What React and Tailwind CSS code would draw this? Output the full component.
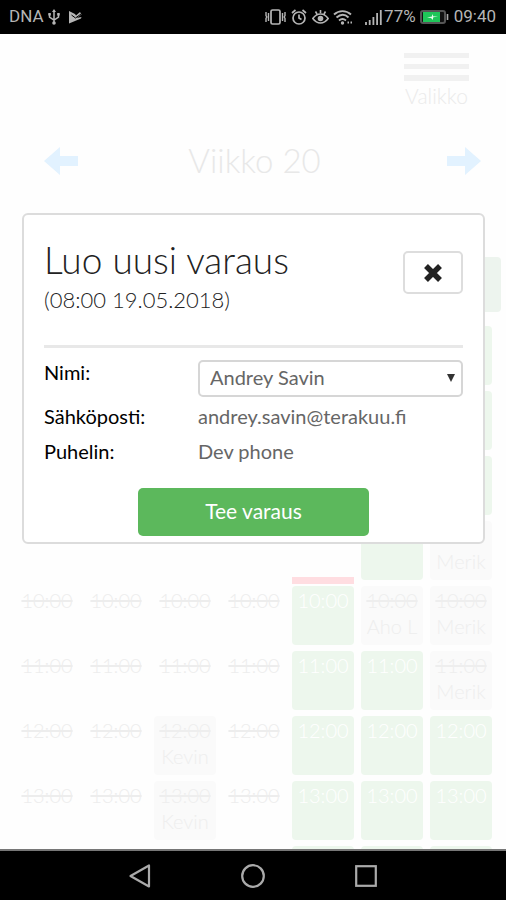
const rows = [
  { time: '06:00', cells: ['', '', '', '', '', '', 'free'] },
  { time: '07:00', cells: ['', '', '', '', '', '', 'free'] },
  { time: '08:00', cells: ['', '', '', '', '', '', 'free'] },
  { time: '', cells: ['', '', '', '', '', 'free', 'Merik'] },
  { time: '10:00', cells: ['past', 'past', 'past', 'past', 'now', 'Aho L', 'Merik'] },
  { time: '11:00', cells: ['past', 'past', 'past', 'past', 'free', 'free', 'Merik'] },
  { time: '12:00', cells: ['past', 'past', 'Kevin', 'past', 'free', 'free', 'free'] },
  { time: '13:00', cells: ['past', 'past', 'Kevin', 'past', 'free', 'free', 'free'] },
  { time: '', cells: ['', '', '', '', 'free', 'free', 'free'] },
];

function Slot({ time, kind, hidden }) {
  if (kind === '') {
    return <div className="h-[59px]" />;
  }
  if (kind === 'past') {
    return <div className="h-[59px] text-center leading-7 text-[#ededed] line-through">{time}</div>;
  }
  if (kind === 'free' || kind === 'now') {
    return (
      <button type="button" aria-label="Vapaa aika" className="relative flex h-[59px] justify-center rounded bg-[#edf7ed] leading-7 text-white">
        {kind === 'now' && <span className="absolute -top-[9px] left-0 h-[7px] w-full bg-[#ffdde1]" />}
        {!hidden && time}
      </button>
    );
  }
  return (
    <div className="h-[59px] overflow-hidden rounded bg-[#fafafa] text-center text-[#eee]">
      <p className="h-7 leading-7 line-through">{time}</p>
      <p className="leading-6">{kind}</p>
    </div>
  );
}

function StatusBar() {
  return (
    <header className="flex h-[34px] shrink-0 items-center justify-between bg-black pl-[9px] pr-[10px] font-[Roboto,sans-serif] text-[17px] text-[#b5b5b5]">
      <div className="flex items-center">
        <span>DNA</span>
        {/* USB */}
        <svg className="ml-1 h-4 w-3" viewBox="0 0 12 16" fill="none" stroke="currentColor" strokeWidth="1.5">
          <path d="M6 2v12M1.500 5v3L6 11l4.500-3V5" />
          <path d="M4 3l2-3 2 3zM.3 4h2.500v2.500H.3zM9.200 4h2.500v2.500H9.200z" fill="currentColor" stroke="none" />
          <circle cx="6" cy="14" r="1.800" fill="currentColor" stroke="none" />
        </svg>
        <svg className="ml-2 h-4 w-[14px]" viewBox="0 0 14 16" fill="currentColor">
          <path d="M1 2l6 3 1 1.500 4-3.500 1.500 2.500-5 3.500L13.500 8 13 9.500 1 14.500z" />
          <path d="M3.500 6l4 3L13 5" fill="none" stroke="#000" strokeWidth="1" />
        </svg>
      </div>
      <div className="flex items-center">
        {/* Vibrate */}
        <svg className="h-4 w-[21px]" viewBox="0 0 21 16" fill="none" stroke="currentColor" strokeWidth="1.700">
          <rect x="6" y="1" width="9" height="14" rx="1.500" />
          <path d="M1 3v3.500l.8 1.500L1 9.500V13M3.500 4v8M17.500 4v8M20 3v3.500L19.200 8l.8 1.500V13" strokeWidth="1.400" />
        </svg>
        {/* Alarm */}
        <svg className="ml-[5px] h-4 w-4" viewBox="0 0 16 16" fill="none" stroke="currentColor" strokeWidth="1.700">
          <circle cx="8" cy="9" r="6" />
          <path d="M8 5.500V9l2.500 1.500M1 4l3.500-3M15 4l-3.500-3" />
        </svg>
        {/* Eye comfort */}
        <svg className="ml-[5px] h-4 w-[17px]" viewBox="0 0 17 16" fill="none" stroke="currentColor" strokeWidth="1.600">
          <path d="M.8 9.500C3 6.500 5.500 5 8.500 5s5.500 1.500 7.700 4.500c-2.200 3-4.700 4.500-7.700 4.500S3 12.500.8 9.500zM8.500 1v3M3.500 2.500L5 5M13.500 2.500L12 5" />
          <circle cx="8.500" cy="9.500" r="2.800" fill="currentColor" stroke="none" />
        </svg>
        {/* Wifi */}
        <svg className="ml-1 h-4 w-5" viewBox="0 0 20 16" fill="none" stroke="currentColor" strokeWidth="1.900">
          <path d="M1 5.500c5-4.500 12-4.500 17 0M3.500 8.500c4-3.500 8.500-3.500 12 0M6 11.500c2.500-2 4.500-2 7 0" />
          <circle cx="9.500" cy="14" r="1.700" fill="currentColor" stroke="none" />
          <path d="M14.500 13.500h1.500M17.500 13.500h1.500" />
        </svg>
        {/* Signal */}
        <svg className="ml-3 h-4 w-[17px]" viewBox="0 0 17 16" stroke="currentColor" strokeWidth="1.800">
          <path d="M1 13v3M4.700 11v5M8.400 8v8M12.100 4v12M15.800 1v15" />
        </svg>
        <span className="ml-[2px]">77%</span>
        {/* Battery */}
        <svg className="ml-1 h-[14px] w-[29px]" viewBox="0 0 29 14">
          <rect x="1" y="1" width="24" height="12" rx="2" fill="#111" stroke="#555" strokeWidth="2" />
          <rect x="3" y="2" width="17" height="10" fill="#1fc659" />
          <path d="M7 7.500l5-1V4l1.500 2.500L18 6l-5 1.500V10L11 8z" fill="#eaffef" />
          <path d="M27.500 4v6" stroke="#aaa" strokeWidth="1.600" />
        </svg>
        <span className="ml-[5px]">09:40</span>
      </div>
    </header>
  );
}

function Arrow({ className }) {
  return (
    <svg className={className} viewBox="0 0 34 28" fill="#e2f2ff">
      <path d="M0 14L16 0v9h18v10H16v9z" />
    </svg>
  );
}

function Schedule() {
  return (
    <div className="bg-[#fefefe] pl-4 pr-[14px] font-light">
      <div className="flex justify-end pr-[23px] pt-[19px]">
        <button type="button" className="flex w-[65px] flex-col text-[#ebebeb]">
          <span className="h-[5px] w-full bg-[#f1f1f1]" />
          <span className="mt-[6px] h-[5px] w-full bg-[#f1f1f1]" />
          <span className="mt-[6px] h-[6px] w-full bg-[#f1f1f1]" />
          <span className="mt-[3px] self-center text-[21px] leading-6">Valikko</span>
        </button>
      </div>
      <div className="mt-7 grid h-11 grid-cols-[34px_1fr_34px] items-center pl-7 pr-[11px]">
        <button type="button" aria-label="Edellinen viikko">
          <Arrow className="h-7 w-[34px]" />
        </button>
        <h1 className="pr-4 text-center text-[33px] text-[#e8e8e8]">Viikko 20</h1>
        <button type="button" aria-label="Seuraava viikko">
          <Arrow className="h-7 w-[34px] rotate-180" />
        </button>
      </div>
      <div className="-mr-[9px] mt-[77px] flex justify-end">
        <div className="h-[55px] w-[62px] rounded bg-[#edf4ee]" />
      </div>
      <div className="mt-[14px] grid grid-cols-7 gap-x-[7px] gap-y-[6px] text-xl">
        {rows.map((row, i) =>
          row.cells.map((kind, j) => (
            <Slot key={`${i}-${j}`} time={row.time} kind={kind} hidden={i < 4} />
          ))
        )}
      </div>
    </div>
  );
}

function BookingDialog() {
  return (
    <section
      role="dialog"
      aria-labelledby="dialog-title"
      className="absolute left-[22px] right-[21px] top-[179px] rounded-md border-2 border-[#dcdcdc] bg-white px-5 pb-[6px] text-xl text-[#666]"
    >
      <div className="flex items-start justify-between border-b-[3px] border-[#e8e8e8] pb-7 pt-[22px]">
        <div className="text-[#222]">
          <h2 id="dialog-title" className="text-[37px] font-light leading-[46px]">Luo uusi varaus</h2>
          <p className="text-[22px] font-light leading-[34px]">(08:00 19.05.2018)</p>
        </div>
        <button
          type="button"
          aria-label="Sulje"
          className="mt-[14px] flex h-[43px] w-[60px] items-center justify-center rounded-[5px] border-2 border-[#ddd]"
        >
          <svg className="h-[18px] w-[18px]" viewBox="0 0 18 18" stroke="#222" strokeWidth="5.500">
            <path d="M2 2l14 14M16 2L2 16" />
          </svg>
        </button>
      </div>
      <form className="mt-3">
        <div className="grid grid-cols-[154px_1fr]">
          <label htmlFor="name" className="leading-6 text-black">Nimi:</label>
          <div className="relative">
            <select
              id="name"
              className="block h-[37px] w-full appearance-none rounded-[5px] border-2 border-[#d6d6d6] bg-white pb-1 pl-[10px] pr-8"
            >
              <option>Andrey Savin</option>
            </select>
            <span className="pointer-events-none absolute right-2 top-[14px] border-x-[4px] border-t-[8px] border-x-transparent border-t-[#333]" />
          </div>
        </div>
        <dl className="mt-[2px] grid grid-cols-[154px_1fr] leading-[35px]">
          <dt className="text-black">Sähköposti:</dt>
          <dd>andrey.savin@terakuu.fi</dd>
          <dt className="text-black">Puhelin:</dt>
          <dd>Dev phone</dd>
        </dl>
        <button type="submit" className="mx-auto mt-[19px] block h-12 w-[231px] rounded-[5px] bg-[#5cb85c] pb-[3px] text-[21px] text-white">
          Tee varaus
        </button>
      </form>
    </section>
  );
}

export default function App() {
  return (
    <div className="flex h-screen flex-col bg-white font-[Lato,sans-serif]">
      <StatusBar />
      <main className="relative min-h-0 flex-1 overflow-hidden">
        <Schedule />
        <BookingDialog />
      </main>
      {/* Android navigation */}
      <nav className="flex h-[51px] shrink-0 items-center justify-center gap-[90px] border-t-2 border-[#777] bg-black text-[#aaa]">
        <button type="button" aria-label="Takaisin">
          <svg className="h-6 w-[22px]" viewBox="0 0 22 24" fill="none" stroke="currentColor" strokeWidth="2.200" strokeLinejoin="round">
            <path d="M20 1.500v21L1.500 12z" />
          </svg>
        </button>
        <button type="button" aria-label="Koti">
          <svg className="h-6 w-6" viewBox="0 0 24 24" fill="none" stroke="currentColor" strokeWidth="2.200">
            <circle cx="12" cy="12" r="10.800" />
          </svg>
        </button>
        <button type="button" aria-label="Viimeisimmät">
          <svg className="h-[22px] w-[22px]" viewBox="0 0 22 22" fill="none" stroke="currentColor" strokeWidth="2.200">
            <rect x="1.200" y="1.200" width="19.600" height="19.600" />
          </svg>
        </button>
      </nav>
    </div>
  );
}
